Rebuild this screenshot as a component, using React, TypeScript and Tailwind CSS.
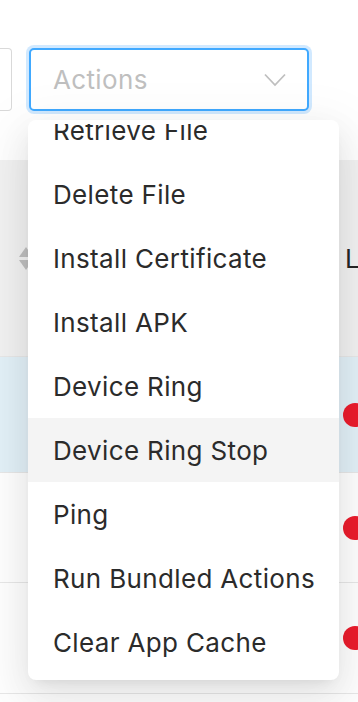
import React from 'react';

const actions = [
  'Retrieve File',
  'Delete File',
  'Install Certificate',
  'Install APK',
  'Device Ring',
  'Device Ring Stop',
  'Ping',
  'Run Bundled Actions',
  'Clear App Cache',
];

const rows = [
  { id: 1, selected: true, height: 'h-[116px]' },
  { id: 2, selected: false, height: 'h-[110px]' },
  { id: 3, selected: false, height: 'h-[111px]' },
  { id: 4, selected: false, height: 'h-[110px]' },
];

export default function App() {
  return (
    <div className="relative w-full h-[702px] overflow-hidden bg-white font-['Inter',sans-serif] tracking-[0.35px]">
      {/* Toolbar */}
      <div className="flex items-start h-[160px] pt-[48px]">
        <div className="w-[12px] h-[63px] border border-l-0 border-[#d9d9d9] rounded-r-[4px] bg-white" />
        <div className="ml-[17px] w-[280px] h-[63px] flex items-center justify-between pl-[22px] pr-[21px] border-2 border-[#40a9ff] rounded-[5px] bg-white shadow-[0_0_0_3px_rgba(24,144,255,0.2)]">
          <span className="text-[26px] text-[#bfbfbf]">Actions</span>
          <svg width="22" height="14" viewBox="0 0 22 14" fill="none">
            <path d="M1 1.5 L11 12 L21 1.5" stroke="#bfbfbf" strokeWidth="1.8" />
          </svg>
        </div>
      </div>

      {/* Table */}
      <div className="flex flex-col">
        <div className="h-[197px] bg-[#f2f2f2] border-b border-[#e8e8e8] flex items-center justify-between">
          <div className="ml-[19px] flex flex-col gap-[3px]">
            <svg width="14" height="10" viewBox="0 0 14 10"><path d="M7 0 L14 10 L0 10 Z" fill="#bfbfbf" /></svg>
            <svg width="14" height="10" viewBox="0 0 14 10"><path d="M0 0 L14 0 L7 10 Z" fill="#bfbfbf" /></svg>
          </div>
          <span className="w-[13px] overflow-hidden text-[26px] text-[#262626]">L</span>
        </div>
        {rows.map(row => (
          <div
            key={row.id}
            className={`${row.height} border-b border-[#e8e8e8] flex items-center justify-end ${row.selected ? 'bg-[#e3f1f8]' : 'bg-white'}`}
          >
            <div className="w-[24px] h-[24px] rounded-full bg-[#ec1c2d] -mr-[9px]" />
          </div>
        ))}
      </div>

      {/* Dropdown menu (list scrolled a little) */}
      <div className="absolute left-[28px] top-[120px] w-[311px] h-[560px] py-[4px] bg-white rounded-[8px] shadow-[0_12px_32px_rgba(0,0,0,0.08),0_6px_12px_-8px_rgba(0,0,0,0.12),0_18px_56px_16px_rgba(0,0,0,0.05)]">
        <div className="h-full overflow-hidden">
          <div className="-mt-[26px]">
            {actions.map(action => (
              <div
                key={action}
                className={`h-[64px] flex items-center px-[25px] text-[26px] text-[#2b2b2b] whitespace-nowrap ${action === 'Device Ring Stop' ? 'bg-[#f4f4f4]' : ''}`}
              >
                {action}
              </div>
            ))}
          </div>
        </div>
      </div>
    </div>
  );
}
